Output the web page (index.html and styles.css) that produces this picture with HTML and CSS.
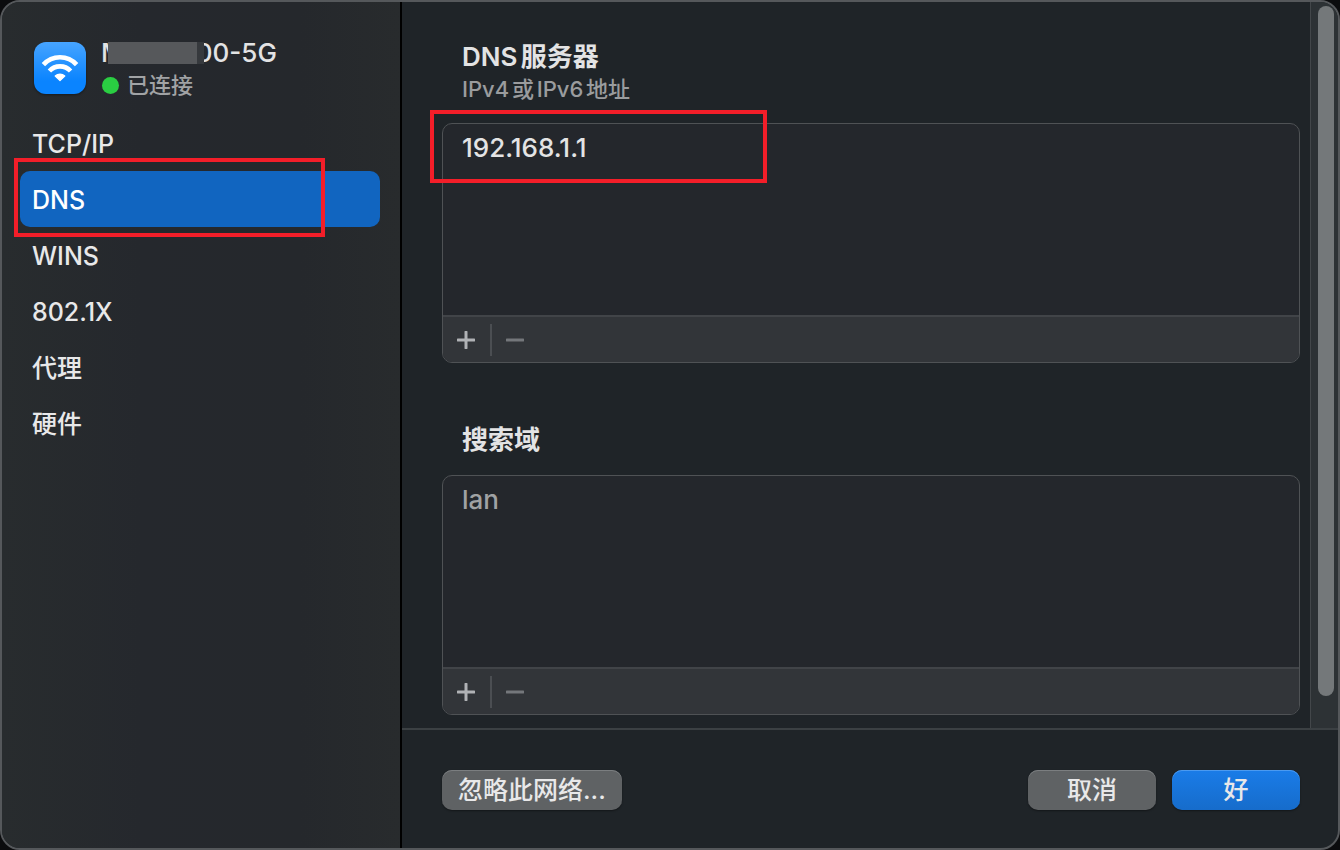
FILE: index.html
```html
<!DOCTYPE html>
<html lang="zh-CN">
<head>
    <meta charset="UTF-8">
    <meta name="viewport" content="width=device-width, initial-scale=1.0">
    <title>DNS服务器</title>
    <link rel="stylesheet" href="styles.css">
</head>
<body>
    <div class="window">
        <!-- Sidebar -->
        <aside class="sidebar">
            <div class="network">
                <svg class="network-icon" viewBox="0 0 52 52" aria-hidden="true">
                    <defs>
                        <linearGradient id="wifiBg" x1="0" y1="0" x2="0" y2="1">
                            <stop offset="0" stop-color="#47a4ff"/>
                            <stop offset="0.75" stop-color="#0a84ff"/>
                        </linearGradient>
                    </defs>
                    <rect width="52" height="52" rx="12" fill="url(#wifiBg)"/>
                    <g fill="none" stroke="#fff" stroke-width="4.6">
                        <path d="M9.4 22.6a22.4 22.4 0 0 1 33.2 0"/>
                        <path d="M15.4 29a14.4 14.4 0 0 1 21.2 0"/>
                    </g>
                    <path d="M26 38.6l-4.8-4.6a7 7 0 0 1 9.6 0z" fill="#fff" stroke="#fff" stroke-width="1.2" stroke-linejoin="round"/>
                </svg>
                <div>
                    <div class="network-name"><span>M</span><span class="mask"></span><span>00-5G</span></div>
                    <div class="network-status"><span class="dot"></span>已连接</div>
                </div>
            </div>
            <nav class="menu">
                <a href="#tcpip">TCP/IP</a>
                <a href="#dns" class="active">DNS<span class="mark mark-menu"></span></a>
                <a href="#wins">WINS</a>
                <a href="#8021x">802.1X</a>
                <a href="#proxy">代理</a>
                <a href="#hardware">硬件</a>
            </nav>
        </aside>

        <main class="main">
            <div class="scroll-area">
                <div class="content">
                    <section>
                        <h2>DNS服务器</h2>
                        <p class="hint">IPv4或IPv6地址</p>
                        <div class="list-box">
                            <ul class="list">
                                <li>192.168.1.1</li>
                            </ul>
                            <div class="toolbar">
                                <button type="button" class="tool" aria-label="添加">
                                    <svg viewBox="0 0 18 18"><path d="M9 1v16M1 9h16"/></svg>
                                </button>
                                <button type="button" class="tool" aria-label="移除" disabled>
                                    <svg viewBox="0 0 18 18"><path d="M1 9h16"/></svg>
                                </button>
                            </div>
                            <span class="mark mark-list"></span>
                        </div>
                    </section>
                    <section>
                        <h2>搜索域</h2>
                        <div class="list-box list-box-search">
                            <ul class="list list-dim">
                                <li>lan</li>
                            </ul>
                            <div class="toolbar">
                                <button type="button" class="tool" aria-label="添加">
                                    <svg viewBox="0 0 18 18"><path d="M9 1v16M1 9h16"/></svg>
                                </button>
                                <button type="button" class="tool" aria-label="移除" disabled>
                                    <svg viewBox="0 0 18 18"><path d="M1 9h16"/></svg>
                                </button>
                            </div>
                        </div>
                    </section>
                </div>
                <div class="scrollbar"><div class="thumb"></div></div>
            </div>
            <footer class="footer">
                <button type="button" class="btn">忽略此网络...</button>
                <button type="button" class="btn btn-wide btn-push">取消</button>
                <button type="button" class="btn btn-wide btn-primary">好</button>
            </footer>
        </main>
    </div>
</body>
</html>
```
FILE: styles.css
```css
* {
    box-sizing: border-box;
}

body {
    margin: 0;
    background-color: #0b0c0e;
    color: #e3e3e4;
    font-family: Inter, "Noto Sans CJK SC", sans-serif;
    font-size: 26px;
    font-weight: 500;
    line-height: 32px;
    text-autospace: normal;
}

.window {
    display: flex;
    min-height: 100vh;
    border: 2px solid #55585b;
    border-radius: 20px;
    overflow: hidden;
    background-color: #1f2428;
}

/* Sidebar */
.sidebar {
    flex: 0 0 400px;
    padding: 32px 20px 0 18px;
    border-right: 2px solid #000;
    background: linear-gradient(90deg, #282c2e, #25282d 35%, #25282c 75%, #282b2d);
}

.network {
    display: flex;
    gap: 15px;
    height: 81px;
    padding-left: 14px;
}

.network-icon {
    width: 52px;
    height: 52px;
    margin-top: 8px;
    filter: drop-shadow(0 1px 1px rgba(0, 0, 0, 0.4));
}

.network-name {
    display: flex;
    height: 35px;
    padding-top: 3px;
}

/* Covers the middle of the network name */
.mask {
    position: relative;
    width: 96px;
    height: 22px;
    margin: 5px -8px 0 -17px;
    background: linear-gradient(90deg, #56585b 0 89px, #36393d 89px);
}

.network-status {
    display: flex;
    align-items: center;
    gap: 8px;
    padding-left: 1px;
    font-size: 22px;
    color: #a1a3a5;
}

.dot {
    width: 17px;
    height: 17px;
    border-radius: 50%;
    background-color: #2ace42;
}

.menu a {
    display: block;
    position: relative;
    height: 56px;
    padding: 1px 12px 0;
    border-radius: 10px;
    color: #e8e8e9;
    font-size: 25px;
    line-height: 56px;
    text-decoration: none;
}

.menu .active {
    background-color: #1165c0;
    color: #fff;
}

/* Red highlight frames */
.mark {
    position: absolute;
    border: 4px solid #f31e29;
    pointer-events: none;
}

.mark-menu {
    top: -13px;
    left: -6px;
    width: 311px;
    height: 79px;
}

.mark-list {
    top: -14px;
    left: -13px;
    width: 337px;
    height: 73px;
}

/* Right side */
.main {
    flex: 1;
    display: flex;
    flex-direction: column;
    min-width: 0;
}

.scroll-area {
    flex: 1;
    display: flex;
}

.content {
    flex: 1;
    padding: 39px 10px 12px 40px;
}

h2 {
    margin: 0;
    padding-left: 20px;
    font-size: 26px;
    font-weight: 600;
    line-height: 32px;
}

.hint {
    margin: 0;
    padding-left: 20px;
    font-size: 22px;
    color: #9a9c9e;
}

.list-box {
    position: relative;
    height: 240px;
    margin: 18px 0 61px;
    display: flex;
    flex-direction: column;
    border: 1px solid #4f5255;
    border-radius: 10px;
    background-color: #24272c;
}

.list-box-search {
    margin: 19px 0 0;
}

.list {
    flex: 1;
    margin: 0;
    padding: 8px 19px;
    list-style: none;
}

.list-dim {
    color: #a0a2a4;
}

.toolbar {
    display: flex;
    align-items: center;
    height: 47px;
    border-top: 2px solid #414448;
    border-radius: 0 0 9px 9px;
    background-color: #323539;
}

.tool {
    display: flex;
    align-items: center;
    height: 32px;
    padding: 0 15px 0 14px;
    border: 0;
    background: none;
    color: #b0b2b5;
}

.tool + .tool {
    border-left: 2px solid #4b4e52;
}

.tool:disabled {
    color: #74777b;
}

.tool svg {
    width: 18px;
    height: 18px;
    fill: none;
    stroke: currentColor;
    stroke-width: 3;
    stroke-linecap: round;
}

.scrollbar {
    width: 28px;
    padding: 4px 4px 32px 7px;
    border-left: 1px solid #43474a;
    background-color: #2d3235;
}

.thumb {
    width: 16px;
    height: 100%;
    border-radius: 8px;
    background-color: #74787a;
}

.footer {
    display: flex;
    gap: 16px;
    height: 120px;
    padding: 40px 38px 0 40px;
    border-top: 2px solid #3b4043;
}

.btn {
    height: 40px;
    padding: 0 16px;
    border: 0;
    border-radius: 10px;
    background-color: #5f6264;
    box-shadow: inset 0 1px 0 #7b7e80, 0 1px 2px rgba(0, 0, 0, 0.4);
    color: #e8e8e9;
    font-family: inherit;
    font-size: 25px;
    font-weight: 500;
    line-height: 38px;
    text-autospace: no-autospace;
}

.btn-wide {
    width: 128px;
}

.btn-push {
    margin-left: auto;
}

.btn-primary {
    background: linear-gradient(#1a7ce8, #166ccb);
    box-shadow: inset 0 1px 0 #4b9af0, 0 1px 2px rgba(0, 0, 0, 0.4);
}
```
